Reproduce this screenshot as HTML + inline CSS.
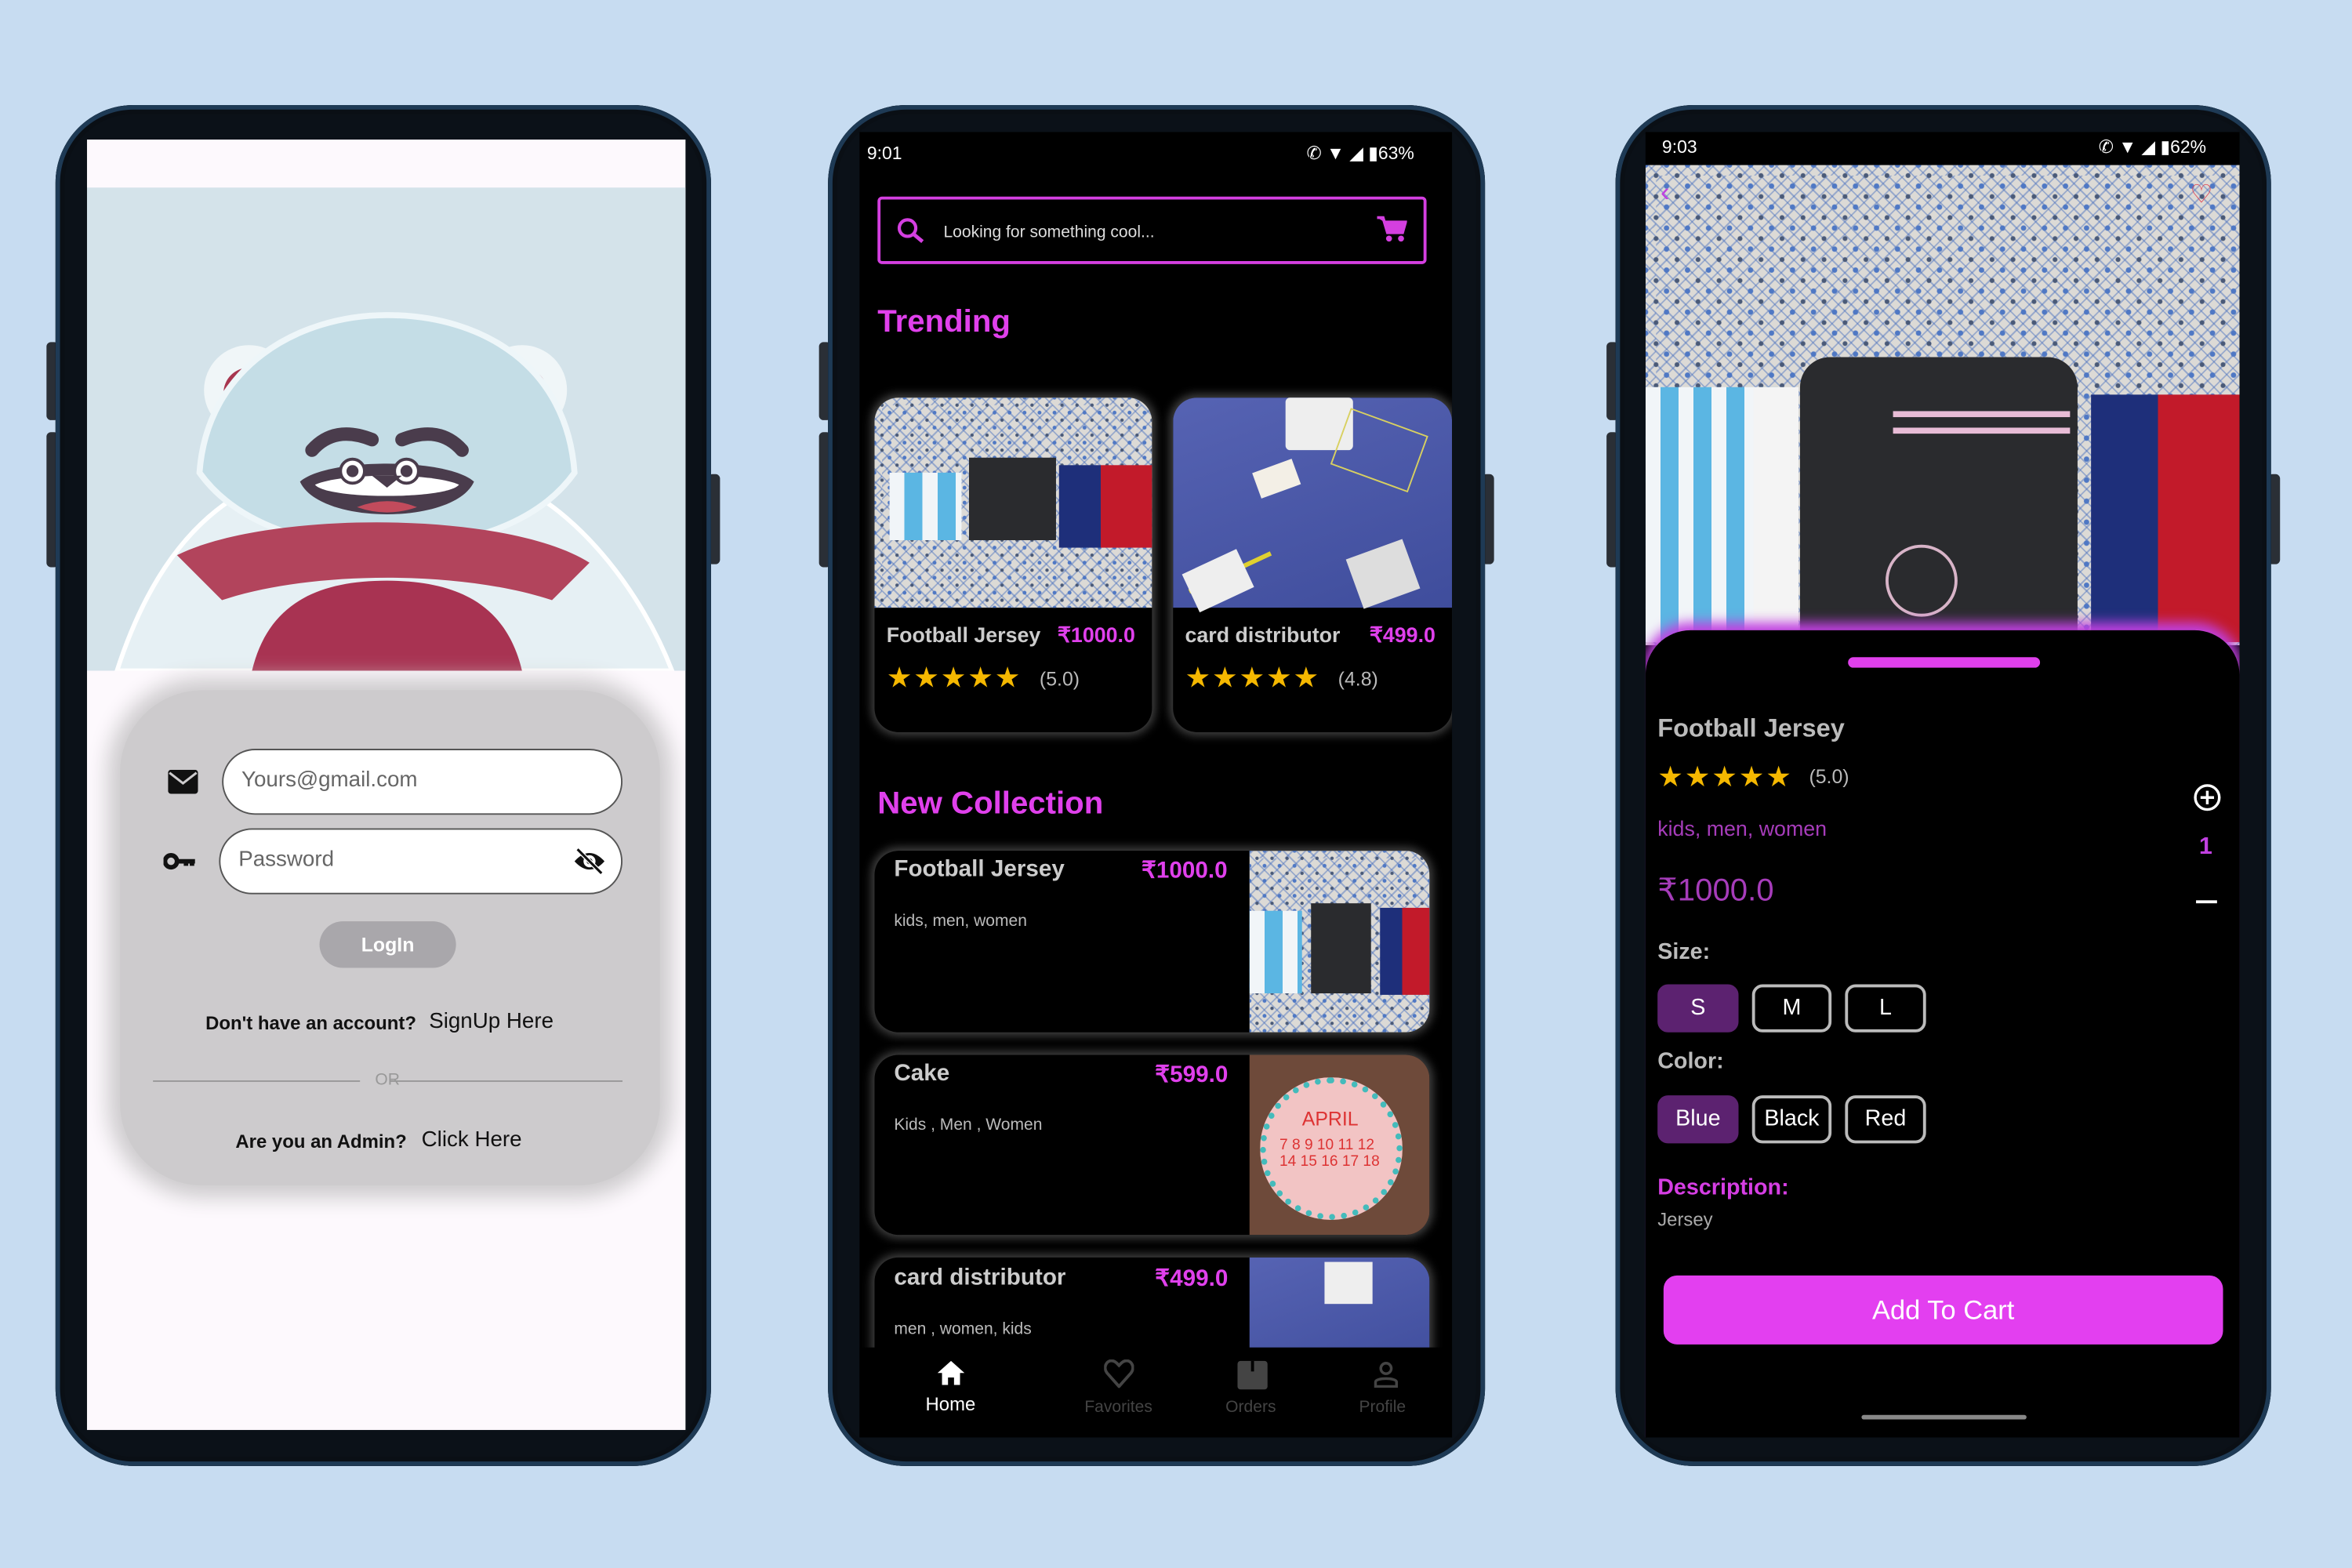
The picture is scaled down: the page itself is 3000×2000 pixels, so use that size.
<!DOCTYPE html>
<html><head><meta charset="utf-8">
<style>
*{margin:0;padding:0;box-sizing:border-box}
html,body{width:3000px;height:2000px;overflow:hidden;background:#c7dcf1}
#w{position:absolute;left:0;top:0;width:1568px;height:1045px;transform:scale(1.9133,1.9139);transform-origin:0 0;font-family:"Liberation Sans",sans-serif}
.a{position:absolute}
.phone{position:absolute;border-radius:52px;background:#0b1118;box-shadow:inset 0 0 0 3px #1e3a55,inset 0 0 0 6px #0a0f15}
.btn{position:absolute;background:#2a2f36;border-radius:3px}
.scr{position:absolute;overflow:hidden}
.pat{background-color:#dcdad6;background-image:radial-gradient(circle,#4a5a78 14%,transparent 18%),radial-gradient(circle,#4f78c4 16%,transparent 20%),repeating-linear-gradient(45deg,transparent 0 5px,rgba(70,110,190,.45) 5px 6px),repeating-linear-gradient(-45deg,transparent 0 5px,rgba(70,110,190,.45) 5px 6px);background-size:10px 10px,10px 10px,auto,auto;background-position:0 0,5px 5px}
.j1{background:repeating-linear-gradient(90deg,#f1f5f8 0 10px,#5bb6e3 10px 22px)}
.j2{background:#2a2b2e}
.j3{background:linear-gradient(90deg,#1e2f7a 0 45%,#c21a2a 45% 100%)}
.t{position:absolute;white-space:nowrap}
.st{color:#f5b800;letter-spacing:1px}
.card{position:absolute;background:#000;border-radius:16px;overflow:hidden;box-shadow:0 0 6px 2px rgba(150,150,150,.45)}
.mg{color:#e040ec}
.chip{position:absolute;height:32px;border-radius:7px;border:2px solid #bbb;color:#fff;font-size:15px;text-align:center;line-height:28px}
</style></head><body><div id="w">

<!-- PHONE 1 -->
<div class="btn" style="left:31px;top:228px;width:8px;height:52px"></div>
<div class="btn" style="left:31px;top:288px;width:8px;height:90px"></div>
<div class="btn" style="left:472px;top:316px;width:8px;height:60px"></div>
<div class="phone" style="left:37px;top:70px;width:437px;height:907px"></div>
<div class="scr" style="left:58px;top:93px;width:399px;height:860px;background:#fdf9fd">
  <div class="a" style="left:0;top:32px;width:399px;height:322px;background:#d4e3ea">
    <svg width="399" height="322" viewBox="0 0 399 322">
      <path d="M20 322 C40 260 70 220 110 200 L290 200 C330 220 370 270 390 322Z" fill="#e6f0f4" stroke="#fff" stroke-width="3"/>
      <circle cx="108" cy="135" r="30" fill="#f0f6f8"/><circle cx="108" cy="137" r="17" fill="#a8364f"/>
      <circle cx="290" cy="135" r="30" fill="#f0f6f8"/><circle cx="290" cy="137" r="17" fill="#a8364f"/>
      <path d="M75 190 C80 120 140 85 200 85 C265 85 320 120 325 190 C300 225 250 240 200 240 C150 240 100 225 75 190Z" fill="#c4dde6" stroke="#eef6f9" stroke-width="4"/>
      <path d="M60 245 C120 215 280 215 335 250 L310 275 C250 255 150 255 90 275Z" fill="#b2445c"/>
      <path d="M110 322 C120 280 150 262 200 262 C250 262 280 280 290 322Z" fill="#a83352"/>
      <path d="M142 196 C160 180 240 180 258 196 C245 225 155 225 142 196Z" fill="#4a3c4c"/>
      <path d="M152 198 C170 190 230 190 248 198 C240 208 160 208 152 198Z" fill="#fff"/>
      <path d="M180 213 Q200 205 220 213 Q200 220 180 213Z" fill="#c24b5c"/>
      <path d="M150 175 Q165 158 190 168" stroke="#4a3c4c" stroke-width="9" fill="none" stroke-linecap="round"/>
      <path d="M210 168 Q235 158 250 175" stroke="#4a3c4c" stroke-width="9" fill="none" stroke-linecap="round"/>
      <circle cx="177" cy="189" r="8" fill="#fff" stroke="#4a3c4c" stroke-width="2"/><circle cx="177" cy="189" r="4" fill="#4a3c4c"/>
      <circle cx="213" cy="189" r="8" fill="#fff" stroke="#4a3c4c" stroke-width="2"/><circle cx="213" cy="189" r="4" fill="#4a3c4c"/>
      <path d="M190 192 L200 200 L210 192Z" fill="#4a3c4c"/>
    </svg>
  </div>
  <div class="a" style="left:22px;top:367px;width:360px;height:330px;background:#cdcbcd;border-radius:55px;box-shadow:0 0 14px 8px #cdcbcd"></div>
  <svg class="a" style="left:54px;top:420px" width="20" height="16" viewBox="0 0 20 16"><rect x="0" y="0" width="20" height="16" rx="2" fill="#111"/><path d="M1 2 L10 9 L19 2" stroke="#cdcbcd" stroke-width="1.6" fill="none"/></svg>
  <svg class="a" style="left:51px;top:475px" width="22" height="12" viewBox="0 0 22 12"><circle cx="5" cy="6" r="4" fill="none" stroke="#111" stroke-width="3"/><path d="M9 6 H21 M15 6 V9 M19 6 V9" stroke="#111" stroke-width="3"/></svg>
  <div class="a" style="left:90px;top:406px;width:267px;height:44px;background:#fff;border:1px solid #555;border-radius:23px"></div>
  <div class="t" style="left:103px;top:419px;font-size:14.5px;color:#666">Yours@gmail.com</div>
  <div class="a" style="left:88px;top:459px;width:269px;height:44px;background:#fff;border:1px solid #555;border-radius:23px"></div>
  <div class="t" style="left:101px;top:472px;font-size:14.5px;color:#666">Password</div>
  <svg class="a" style="left:324px;top:472px" width="22" height="18" viewBox="0 0 22 18"><path d="M1 9 Q11 -2 21 9 Q11 20 1 9Z" fill="#111"/><circle cx="11" cy="9" r="4" fill="#fff"/><circle cx="11" cy="9" r="2" fill="#111"/><path d="M3 1 L19 17" stroke="#fff" stroke-width="3"/><path d="M3 1 L19 17" stroke="#111" stroke-width="1.6"/></svg>
  <div class="a" style="left:155px;top:521px;width:91px;height:31px;background:#a9a7ab;border-radius:16px;color:#fff;font-size:13px;font-weight:bold;text-align:center;line-height:31px">LogIn</div>
  <div class="t" style="left:79px;top:582px;font-size:12.5px;font-weight:bold;color:#111">Don't have an account?</div>
  <div class="t" style="left:228px;top:580px;font-size:14.5px;color:#111">SignUp Here</div>
  <div class="a" style="left:44px;top:627px;width:138px;height:1px;background:#999"></div>
  <div class="a" style="left:202px;top:627px;width:155px;height:1px;background:#999"></div>
  <div class="t" style="left:192px;top:621px;font-size:11px;color:#999">OR</div>
  <div class="t" style="left:99px;top:661px;font-size:12.5px;font-weight:bold;color:#111">Are you an Admin?</div>
  <div class="t" style="left:223px;top:659px;font-size:14.5px;color:#111">Click Here</div>
</div>

<!-- PHONE 2 -->
<div class="btn" style="left:546px;top:228px;width:8px;height:52px"></div>
<div class="btn" style="left:546px;top:288px;width:8px;height:90px"></div>
<div class="btn" style="left:988px;top:316px;width:8px;height:60px"></div>
<div class="phone" style="left:552px;top:70px;width:438px;height:907px"></div>
<div class="scr" style="left:573px;top:88px;width:395px;height:870px;background:#000">
  <div class="t" style="left:5px;top:7px;font-size:12px;color:#fff">9:01</div>
  <div class="t" style="left:298px;top:7px;font-size:12px;color:#fff">✆ ▼ ◢ ▮63%</div>
  <div class="a" style="left:12px;top:43px;width:366px;height:45px;border:2px solid #d43fe0;border-radius:3px"></div>
  <svg class="a" style="left:25px;top:57px" width="18" height="18" viewBox="0 0 18 18"><circle cx="7" cy="7" r="5.5" fill="none" stroke="#d43fe0" stroke-width="2.2"/><path d="M11 11 L17 16" stroke="#d43fe0" stroke-width="2.5"/></svg>
  <div class="t" style="left:56px;top:61px;font-size:11px;color:#ddd">Looking for something cool...</div>
  <svg class="a" style="left:345px;top:56px" width="20" height="18" viewBox="0 0 20 18"><path d="M0 1 H4 L7 11 H17 L19 4 H5" fill="#d43fe0" stroke="#d43fe0" stroke-width="2"/><circle cx="8" cy="15" r="2" fill="#d43fe0"/><circle cx="16" cy="15" r="2" fill="#d43fe0"/></svg>
  <div class="t mg" style="left:12px;top:115px;font-size:21px;font-weight:bold">Trending</div>

  <div class="card" style="left:10px;top:177px;width:185px;height:223px">
    <div class="a pat" style="left:0;top:0;width:185px;height:140px"></div>
    <div class="a j1" style="left:10px;top:50px;width:48px;height:45px"></div>
    <div class="a j2" style="left:63px;top:40px;width:58px;height:55px"></div>
    <div class="a j3" style="left:123px;top:45px;width:62px;height:55px"></div>
    <div class="t" style="left:8px;top:150px;font-size:14px;font-weight:bold;color:#ccc">Football Jersey</div>
    <div class="t mg" style="left:122px;top:150px;font-size:14px;font-weight:bold">₹1000.0</div>
    <div class="t st" style="left:8px;top:176px;font-size:19px">★★★★★</div>
    <div class="t" style="left:110px;top:180px;font-size:13px;color:#bbb">(5.0)</div>
  </div>
  <div class="card" style="left:209px;top:177px;width:186px;height:223px">
    <div class="a" style="left:0;top:0;width:186px;height:140px;background:linear-gradient(160deg,#5663b3,#3f4d9c)"></div>
    <div class="a" style="left:75px;top:0;width:45px;height:35px;background:#eee;border-radius:3px"></div>
    <div class="a" style="left:55px;top:45px;width:28px;height:18px;background:#f3efe6;transform:rotate(-20deg)"></div>
    <div class="a" style="left:110px;top:15px;width:55px;height:40px;border:1px solid #d8d060;transform:rotate(20deg)"></div>
    <div class="a" style="left:8px;top:115px;width:60px;height:3px;background:#e0d030;transform:rotate(-25deg)"></div>
    <div class="a" style="left:10px;top:108px;width:40px;height:28px;background:#eee;transform:rotate(-25deg)"></div>
    <div class="a" style="left:120px;top:100px;width:40px;height:35px;background:#ddd;transform:rotate(-20deg)"></div>
    <div class="t" style="left:8px;top:150px;font-size:14px;font-weight:bold;color:#ccc">card distributor</div>
    <div class="t mg" style="left:131px;top:150px;font-size:14px;font-weight:bold">₹499.0</div>
    <div class="t st" style="left:8px;top:176px;font-size:19px">★★★★★</div>
    <div class="t" style="left:110px;top:180px;font-size:13px;color:#bbb">(4.8)</div>
  </div>

  <div class="t mg" style="left:12px;top:436px;font-size:21px;font-weight:bold">New Collection</div>

  <div class="card" style="left:10px;top:479px;width:370px;height:121px">
    <div class="t" style="left:13px;top:4px;font-size:15.5px;font-weight:bold;color:#ccc">Football Jersey</div>
    <div class="t mg" style="left:178px;top:4px;font-size:15.5px;font-weight:bold">₹1000.0</div>
    <div class="t" style="left:13px;top:41px;font-size:11px;color:#bbb">kids,  men,  women</div>
    <div class="a pat" style="left:250px;top:0;width:120px;height:121px"></div>
    <div class="a j1" style="left:250px;top:40px;width:35px;height:55px"></div>
    <div class="a j2" style="left:291px;top:35px;width:40px;height:60px"></div>
    <div class="a j3" style="left:337px;top:38px;width:33px;height:58px"></div>
  </div>
  <div class="card" style="left:10px;top:615px;width:370px;height:120px">
    <div class="t" style="left:13px;top:4px;font-size:15.5px;font-weight:bold;color:#ccc">Cake</div>
    <div class="t mg" style="left:187px;top:4px;font-size:15.5px;font-weight:bold">₹599.0</div>
    <div class="t" style="left:13px;top:41px;font-size:11px;color:#bbb">Kids ,  Men ,  Women</div>
    <div class="a" style="left:250px;top:0;width:120px;height:120px;background:#6e4a3a"></div>
    <div class="a" style="left:257px;top:15px;width:95px;height:95px;border-radius:50%;background:#f2c4c4;border:4px dotted #4bb"></div>
    <div class="t" style="left:285px;top:35px;font-size:13px;color:#d33">APRIL</div>
    <div class="t" style="left:270px;top:55px;font-size:10px;color:#d33">7 8 9 10 11 12<br>14 15 16 17 18</div>
  </div>
  <div class="card" style="left:10px;top:750px;width:370px;height:80px">
    <div class="t" style="left:13px;top:5px;font-size:15.5px;font-weight:bold;color:#ccc">card distributor</div>
    <div class="t mg" style="left:187px;top:5px;font-size:15.5px;font-weight:bold">₹499.0</div>
    <div class="t" style="left:13px;top:42px;font-size:11px;color:#bbb">men ,  women,  kids</div>
    <div class="a" style="left:250px;top:0;width:120px;height:80px;background:linear-gradient(160deg,#5663b3,#3f4d9c)"></div>
    <div class="a" style="left:300px;top:3px;width:32px;height:28px;background:#eee"></div>
  </div>

  <div class="a" style="left:0;top:810px;width:395px;height:60px;background:#000"></div>
  <svg class="a" style="left:52px;top:819px" width="18" height="16" viewBox="0 0 18 16"><path d="M9 0 L18 8 H15 V16 H11 V11 H7 V16 H3 V8 H0Z" fill="#fff"/></svg>
  <div class="t" style="left:44px;top:841px;font-size:12.5px;color:#fff">Home</div>
  <svg class="a" style="left:163px;top:818px" width="20" height="19" viewBox="0 0 20 19"><path d="M10 18 L2 9 C-1 5 2 0 6 1 C8 1.5 9 3 10 4 C11 3 12 1.5 14 1 C18 0 21 5 18 9Z" fill="none" stroke="#444" stroke-width="2"/></svg>
  <div class="t" style="left:150px;top:844px;font-size:11px;color:#444">Favorites</div>
  <div class="a" style="left:252px;top:819px;width:20px;height:19px;background:#444;border-radius:2px"></div>
  <div class="a" style="left:261px;top:819px;width:2px;height:7px;background:#000"></div>
  <div class="t" style="left:244px;top:844px;font-size:11px;color:#444">Orders</div>
  <svg class="a" style="left:342px;top:819px" width="18" height="18" viewBox="0 0 18 18"><circle cx="9" cy="5" r="3.5" fill="none" stroke="#444" stroke-width="1.8"/><path d="M2 17 V14 C2 11 16 11 16 14 V17Z" fill="none" stroke="#444" stroke-width="1.8"/></svg>
  <div class="t" style="left:333px;top:844px;font-size:11px;color:#444">Profile</div>
</div>

<!-- PHONE 3 -->
<div class="btn" style="left:1071px;top:228px;width:8px;height:52px"></div>
<div class="btn" style="left:1071px;top:288px;width:8px;height:90px"></div>
<div class="btn" style="left:1512px;top:316px;width:8px;height:60px"></div>
<div class="phone" style="left:1077px;top:70px;width:437px;height:907px"></div>
<div class="scr" style="left:1097px;top:88px;width:396px;height:870px;background:#000">
  <div class="a pat" style="left:0;top:22px;width:396px;height:320px;background-size:14px 14px,14px 14px,auto,auto;background-position:0 0,7px 7px"></div>
  <div class="a j1" style="left:0;top:170px;width:90px;height:170px"></div>
  <div class="a" style="left:72px;top:170px;width:30px;height:170px;background:#f4f4f4"></div>
  <div class="a j2" style="left:103px;top:150px;width:185px;height:190px;border-radius:20px 20px 0 0"></div>
  <div class="a" style="left:165px;top:186px;width:118px;height:4px;background:#e8bcd6"></div>
  <div class="a" style="left:165px;top:197px;width:118px;height:4px;background:#e8bcd6"></div>
  <div class="a" style="left:160px;top:275px;width:48px;height:48px;border-radius:50%;border:2px solid #d8b4c8"></div>
  <div class="a j3" style="left:297px;top:175px;width:99px;height:165px"></div>
  <div class="t" style="left:11px;top:3px;font-size:12px;color:#fff">9:03</div>
  <div class="t" style="left:302px;top:3px;font-size:12px;color:#fff">✆ ▼ ◢ ▮62%</div>
  <div class="t" style="left:10px;top:30px;font-size:18px;color:#c040e0">‹</div>
  <div class="t" style="left:363px;top:32px;font-size:17px;color:#e04050">♡</div>
  <div class="a" style="left:0;top:332px;width:396px;height:560px;background:#000;border-radius:30px 30px 0 0;box-shadow:0 -3px 8px 2px #c040e0"></div>
  <div class="a" style="left:135px;top:350px;width:128px;height:7px;background:#e040ec;border-radius:4px"></div>
  <div class="t" style="left:8px;top:388px;font-size:17px;font-weight:bold;color:#bbb">Football Jersey</div>
  <div class="t st" style="left:8px;top:419px;font-size:19px">★★★★★</div>
  <div class="t" style="left:109px;top:422px;font-size:13px;color:#bbb">(5.0)</div>
  <div class="t" style="left:8px;top:456px;font-size:14px;color:#a63cba">kids,  men,  women</div>
  <div class="t" style="left:8px;top:493px;font-size:21px;color:#a63cba">₹1000.0</div>
  <svg class="a" style="left:365px;top:434px" width="19" height="19" viewBox="0 0 19 19"><circle cx="9.5" cy="9.5" r="8" fill="none" stroke="#fff" stroke-width="1.8"/><path d="M9.5 5 V14 M5 9.5 H14" stroke="#fff" stroke-width="1.8"/></svg>
  <div class="t" style="left:369px;top:468px;font-size:16px;font-weight:bold;color:#c040e0">1</div>
  <div class="a" style="left:367px;top:512px;width:14px;height:2px;background:#fff"></div>
  <div class="t" style="left:8px;top:538px;font-size:15px;font-weight:bold;color:#bbb">Size:</div>
  <div class="chip" style="left:8px;top:568px;width:54px;background:#5c2270;border-color:#5c2270">S</div>
  <div class="chip" style="left:71px;top:568px;width:53px">M</div>
  <div class="chip" style="left:133px;top:568px;width:54px">L</div>
  <div class="t" style="left:8px;top:611px;font-size:15px;font-weight:bold;color:#bbb">Color:</div>
  <div class="chip" style="left:8px;top:642px;width:54px;background:#5c2270;border-color:#5c2270">Blue</div>
  <div class="chip" style="left:71px;top:642px;width:53px">Black</div>
  <div class="chip" style="left:133px;top:642px;width:54px">Red</div>
  <div class="t" style="left:8px;top:695px;font-size:15px;font-weight:bold;color:#d63ee4">Description:</div>
  <div class="t" style="left:8px;top:718px;font-size:12.5px;color:#aaa">Jersey</div>
  <div class="a" style="left:12px;top:762px;width:373px;height:46px;background:#e33ff0;border-radius:9px;color:#fff;font-size:18px;text-align:center;line-height:46px">Add To Cart</div>
  <div class="a" style="left:144px;top:855px;width:110px;height:3px;background:#888;border-radius:2px"></div>
</div>

</div></body></html>
